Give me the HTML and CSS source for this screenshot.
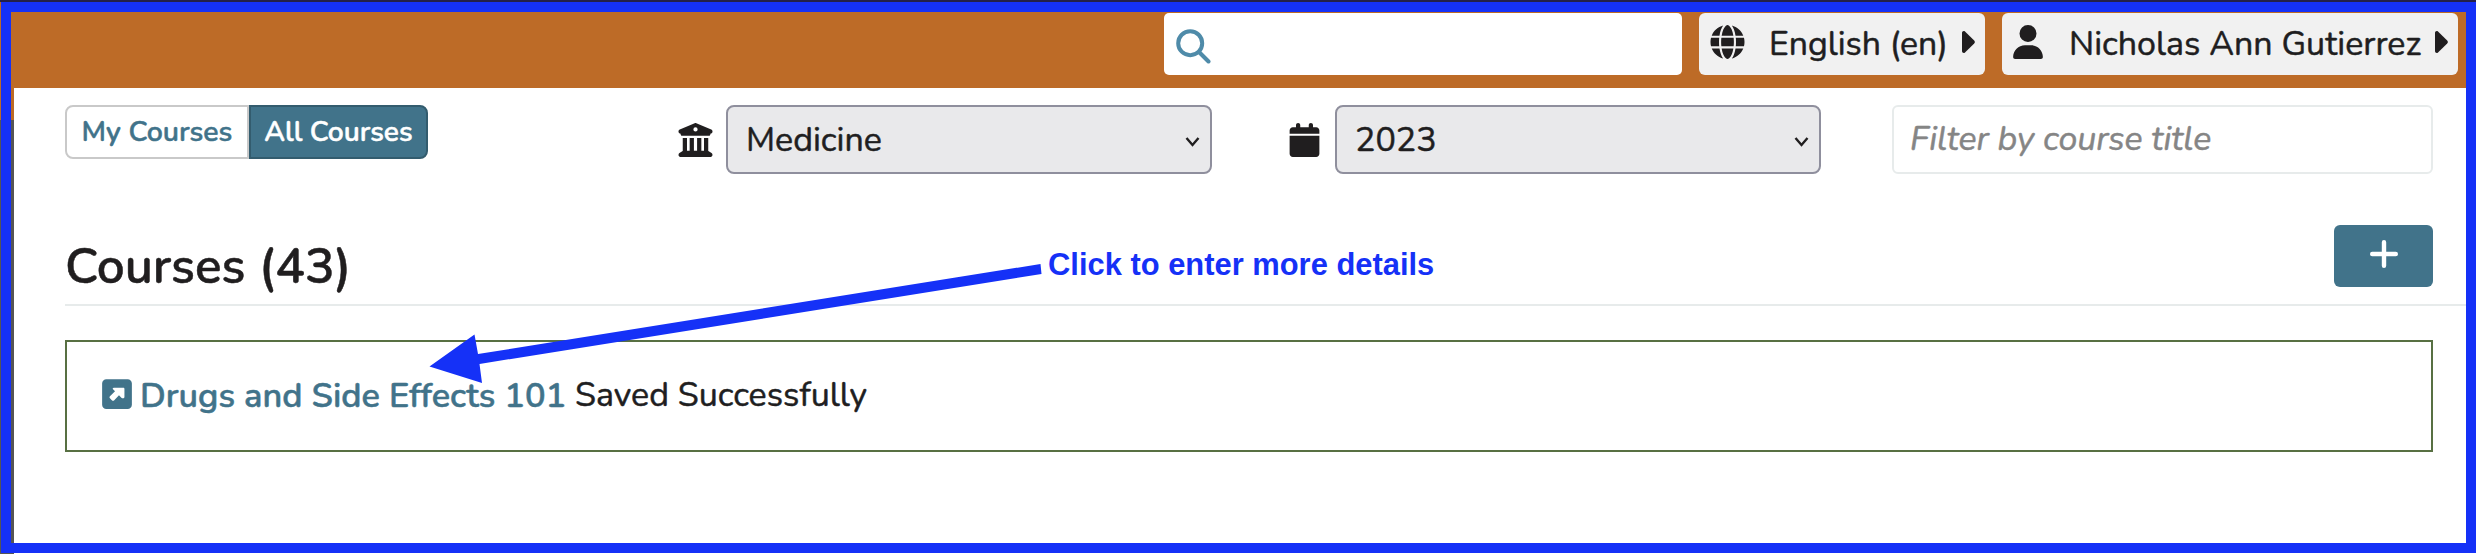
FILE: index.html
```
<!DOCTYPE html>
<html lang="en">
<head>
<meta charset="utf-8">
<title>Courses</title>
<link rel="stylesheet" href="styles.css">
</head>
<body>
<div class="shell">
  <header class="header">
    <div class="search">
      <svg class="search-icon" viewBox="0 0 35 35"><circle cx="14.200" cy="14.200" r="12"/><path d="M23 23L32.500 32.500"/></svg>
    </div>
    <button class="menu menu-locale">
      <svg class="globe" viewBox="0 0 512 512"><path d="M352 256c0 22.200-1.200 43.600-3.300 64H163.300c-2.200-20.400-3.300-41.800-3.300-64s1.200-43.600 3.300-64H348.700c2.200 20.400 3.300 41.800 3.300 64zm28.800-64H503.900c5.300 20.500 8.100 41.900 8.100 64s-2.800 43.500-8.100 64H380.800c2.100-20.600 3.200-42 3.200-64s-1.100-43.400-3.200-64zm112.600-32H376.700c-10-63.900-29.800-117.400-55.300-151.600c78.300 20.700 142 77.500 171.900 151.600zm-149.100 0H167.700c6.100-36.400 15.500-68.600 27-94.700c10.500-23.600 22.200-40.700 33.500-51.500C239.400 3.200 248.700 0 256 0s16.600 3.200 27.800 13.800c11.300 10.800 23 27.900 33.500 51.500c11.600 26 20.900 58.200 27 94.700zm-209 0H18.600C48.600 85.900 112.200 29.100 190.600 8.400C165.100 42.600 145.300 96.100 135.300 160zM8.100 192H131.200c-2.100 20.600-3.200 42-3.200 64s1.100 43.400 3.200 64H8.100C2.800 299.500 0 278.100 0 256s2.800-43.500 8.100-64zM194.700 446.600c-11.600-26-20.900-58.200-27-94.600H344.300c-6.100 36.400-15.500 68.600-27 94.600c-10.500 23.600-22.200 40.700-33.500 51.500C272.600 508.800 263.300 512 256 512s-16.600-3.200-27.800-13.800c-11.300-10.800-23-27.900-33.500-51.500zM135.300 352c10 63.900 29.800 117.400 55.300 151.600C112.200 482.900 48.600 426.100 18.600 352H135.300zm358.100 0c-30 74.100-93.600 130.900-171.900 151.600c25.500-34.200 45.200-87.700 55.300-151.600H493.400z"/></svg>
      <span class="menu-label">English (en)</span>
      <svg class="caret" viewBox="0 0 13 22"><path d="M0 2C0 .3 1.800-.5 3 .6L12.200 9.600Q13.500 11 12.200 12.400L3 21.400C1.800 22.500 0 21.700 0 20Z"/></svg>
    </button>
    <button class="menu menu-user">
      <svg class="user" viewBox="0 0 448 512"><path d="M224 256A128 128 0 1 0 224 0a128 128 0 1 0 0 256zm-45.700 48C79.800 304 0 383.800 0 482.300C0 498.700 13.300 512 29.700 512H418.300c16.400 0 29.700-13.300 29.700-29.700C448 383.800 368.200 304 269.700 304H178.300z"/></svg>
      <span class="menu-label">Nicholas Ann Gutierrez</span>
      <svg class="caret" viewBox="0 0 13 22"><path d="M0 2C0 .3 1.800-.5 3 .6L12.200 9.600Q13.500 11 12.200 12.400L3 21.400C1.800 22.500 0 21.700 0 20Z"/></svg>
    </button>
  </header>
  <main class="main">
    <div class="filters">
      <div class="tabs">
        <span class="tab tab-left">My Courses</span><span class="tab tab-active">All Courses</span>
      </div>
      <div class="school">
        <svg class="institution" viewBox="0 0 512 512"><path d="M243.400 2.600l-224 96c-14 6-21.800 21-18.700 35.800S16.800 160 32 160v8c0 13.300 10.700 24 24 24H456c13.300 0 24-10.700 24-24v-8c15.200 0 28.300-10.700 31.300-25.600s-4.800-29.900-18.700-35.800l-224-96c-8-3.400-17.200-3.400-25.200 0zM128 224H64V420.300c-.6 .3-1.200 .7-1.800 1.100l-48 32c-11.700 7.800-17 22.400-12.900 35.900S17.900 512 32 512H480c14.100 0 26.500-9.200 30.600-22.700s-1.100-28.100-12.900-35.900l-48-32c-.6-.4-1.200-.7-1.800-1.100V224H384V416H344V224H280V416H232V224H168V416H128V224zM256 64a32 32 0 1 1 0 64 32 32 0 1 1 0-64z"/></svg>
        <div class="select"><span>Medicine</span><svg class="chevron" viewBox="0 0 15 11"><path d="M1.500 2L7.500 9L13.500 2"/></svg></div>
      </div>
      <div class="year">
        <svg class="calendar" viewBox="0 0 448 512"><path d="M96 32V64H48C21.500 64 0 85.500 0 112v48H448V112c0-26.500-21.500-48-48-48H352V32c0-17.700-14.300-32-32-32s-32 14.300-32 32V64H160V32c0-17.700-14.300-32-32-32S96 14.300 96 32zM448 192H0V464c0 26.500 21.500 48 48 48H400c26.500 0 48-21.500 48-48V192z"/></svg>
        <div class="select"><span>2023</span><svg class="chevron" viewBox="0 0 15 11"><path d="M1.500 2L7.500 9L13.500 2"/></svg></div>
      </div>
      <input class="title-filter" type="text" placeholder="Filter by course title">
    </div>
    <div class="list-header">
      <h2 class="title">Courses (43)</h2>
      <button class="add"><svg class="plus" viewBox="0 0 28 28"><path d="M14 2.200V25.800M2.200 14H25.800"/></svg></button>
    </div>
    <div class="saved">
      <svg class="link-icon" viewBox="0 0 448 512"><path fill-rule="evenodd" d="M384 32c35.300 0 64 28.700 64 64V416c0 35.300-28.700 64-64 64H64c-35.300 0-64-28.700-64-64V96C0 60.700 28.700 32 64 32H384zM320 160H176c-14 0-22 15-12 26L194 216L118 291C109 300 109 311 118 320L150 352C159 361 170 361 179 352L254 276L290 312C302 323 336 326 336 302V176C336 167 329 160 320 160z"/></svg>
      <a class="saved-link">Drugs and Side Effects 101</a>
      <span class="saved-text">Saved Successfully</span>
    </div>
  </main>
  <div class="edge edge-top"></div>
  <div class="edge edge-left"></div>
  <div class="frame"></div>
  <svg class="arrow" viewBox="0 0 2476 554"><path d="M429.500 366.500L474.500 334.500L478 354L1040.500 264L1041.500 274L479.500 364L482 383Z"/></svg>
  <div class="callout">Click to enter more details</div>
</div>
</body>
</html>
```
FILE: styles.css
```
* { box-sizing: border-box; }

body {
  margin: 0;
  background: #fff;
  color: #201e1f;
  font-family: Nunito, "Open Sans", sans-serif;
  font-size: 34px;
  -webkit-text-stroke: 0.5px currentColor;
}

svg { display: block; flex: none; fill: currentColor; }

button {
  margin: 0;
  border: 0;
  color: inherit;
  font: inherit;
}

.shell {
  position: relative;
  width: 2476px;
  height: 554px;
  overflow: hidden;
}

.header {
  display: flex;
  justify-content: flex-end;
  gap: 17px;
  height: 88px;
  padding: 13px 18px 13px 0;
  background: #bd6b27;
}

.search {
  display: flex;
  align-items: center;
  width: 518px;
  height: 62px;
  padding: 4px 0 0 12px;
  border-radius: 5px;
  background: #fff;
}

.search-icon {
  width: 35px;
  height: 35px;
  fill: none;
  stroke: #4f8ba9;
  stroke-width: 4;
  stroke-linecap: round;
}

.menu {
  display: flex;
  height: 62px;
  padding: 0 10px 0 11px;
  border-radius: 6px;
  background: #f1f1f1;
  line-height: 62px;
  white-space: nowrap;
}

.menu-locale { width: 286px; }
.menu-user { width: 456px; }
.menu-label { flex: 1; text-align: left; }

.menu-locale .menu-label { font-size: 33.8px; }

.globe { width: 35px; height: 34px; margin: 12px 24px 0 0; }
.user { width: 30px; height: 34px; margin: 12px 26px 0 0; }
.caret { width: 13px; height: 22px; margin-top: 18px; }

.main { padding-left: 65px; }

.filters {
  display: flex;
  padding: 17px 43px 0 0;
}

.tabs {
  display: flex;
  width: 613px;
  height: 54px;
  font-size: 28.5px;
  font-weight: 600;
  line-height: 50px;
  white-space: nowrap;
}

.tab {
  width: 184px;
  border: 2px solid #c9c9c9;
  border-radius: 8px 0 0 8px;
  color: #41738a;
  text-align: center;
}

.tab-active {
  width: 179px;
  border-color: #335c6e;
  border-radius: 0 8px 8px 0;
  background: #41738a;
  color: #fff;
  font-size: 28.2px;
}

.school, .year { display: flex; align-items: center; }
.school { gap: 13px; }
.year { gap: 15px; margin-left: 77px; }
.institution { width: 35px; height: 34px; }
.calendar { width: 31px; height: 34px; }

.select {
  display: flex;
  align-items: center;
  justify-content: space-between;
  width: 486px;
  height: 69px;
  padding: 1px 10px 0 18px;
  border: 2px solid #8f8f9d;
  border-radius: 8px;
  background: #e9e9eb;
  line-height: 62px;
}

.chevron {
  width: 15px;
  height: 11px;
  margin-top: 2px;
  fill: none;
  stroke: currentColor;
  stroke-width: 2.400;
}

.title-filter {
  width: 541px;
  height: 69px;
  margin-left: auto;
  padding: 0 16px 2px;
  border: 2px solid #e7ebeb;
  border-radius: 6px;
  font: italic 33.9px Nunito, "Open Sans", sans-serif;
}

.title-filter::placeholder { color: #858585; opacity: 1; }

.list-header {
  display: flex;
  justify-content: space-between;
  height: 81px;
  margin: 51px 10px 0 0;
  padding-right: 33px;
  border-bottom: 2px solid #e7ebeb;
}

.title {
  margin: 0;
  font-size: 49.5px;
  font-weight: 600;
  line-height: 84px;
}

.add {
  display: flex;
  justify-content: center;
  width: 99px;
  height: 62px;
  padding: 15px 0 0;
  border-radius: 6px;
  background: #41738a;
  color: #fff;
}

.plus {
  width: 28px;
  height: 28px;
  stroke: currentColor;
  stroke-width: 4.400;
  stroke-linecap: round;
}

.saved {
  display: flex;
  align-items: center;
  width: 2368px;
  height: 112px;
  margin-top: 34px;
  padding: 0 0 2px 35px;
  border: 2px solid #587043;
  white-space: nowrap;
}

.link-icon { width: 30px; height: 34px; margin: -2px 8px 0 0; }
.link-icon, .saved-link { color: #41738a; }
.saved-link { margin-right: 9px; font-size: 34.300px; font-weight: 600; }

.frame {
  position: absolute;
  inset: 2px 0 1px 1px;
  border: 10px solid #1531f7;
}

.edge { position: absolute; top: 0; left: 0; }
.edge-top { width: 100%; height: 2px; background: #24204a; }

.edge-left {
  top: 2px;
  width: 14px;
  height: 552px;
  background: linear-gradient(#bd6b27 118px, #555 118px);
}

.arrow {
  position: absolute;
  inset: 0;
  width: 2476px;
  height: 554px;
  fill: #1531f7;
}

.callout {
  position: absolute;
  top: 245px;
  left: 1048px;
  color: #1531f7;
  font: bold 30.900px/40px "Liberation Sans", Arial, sans-serif;
  white-space: nowrap;
  -webkit-text-stroke: 0;
}
```
